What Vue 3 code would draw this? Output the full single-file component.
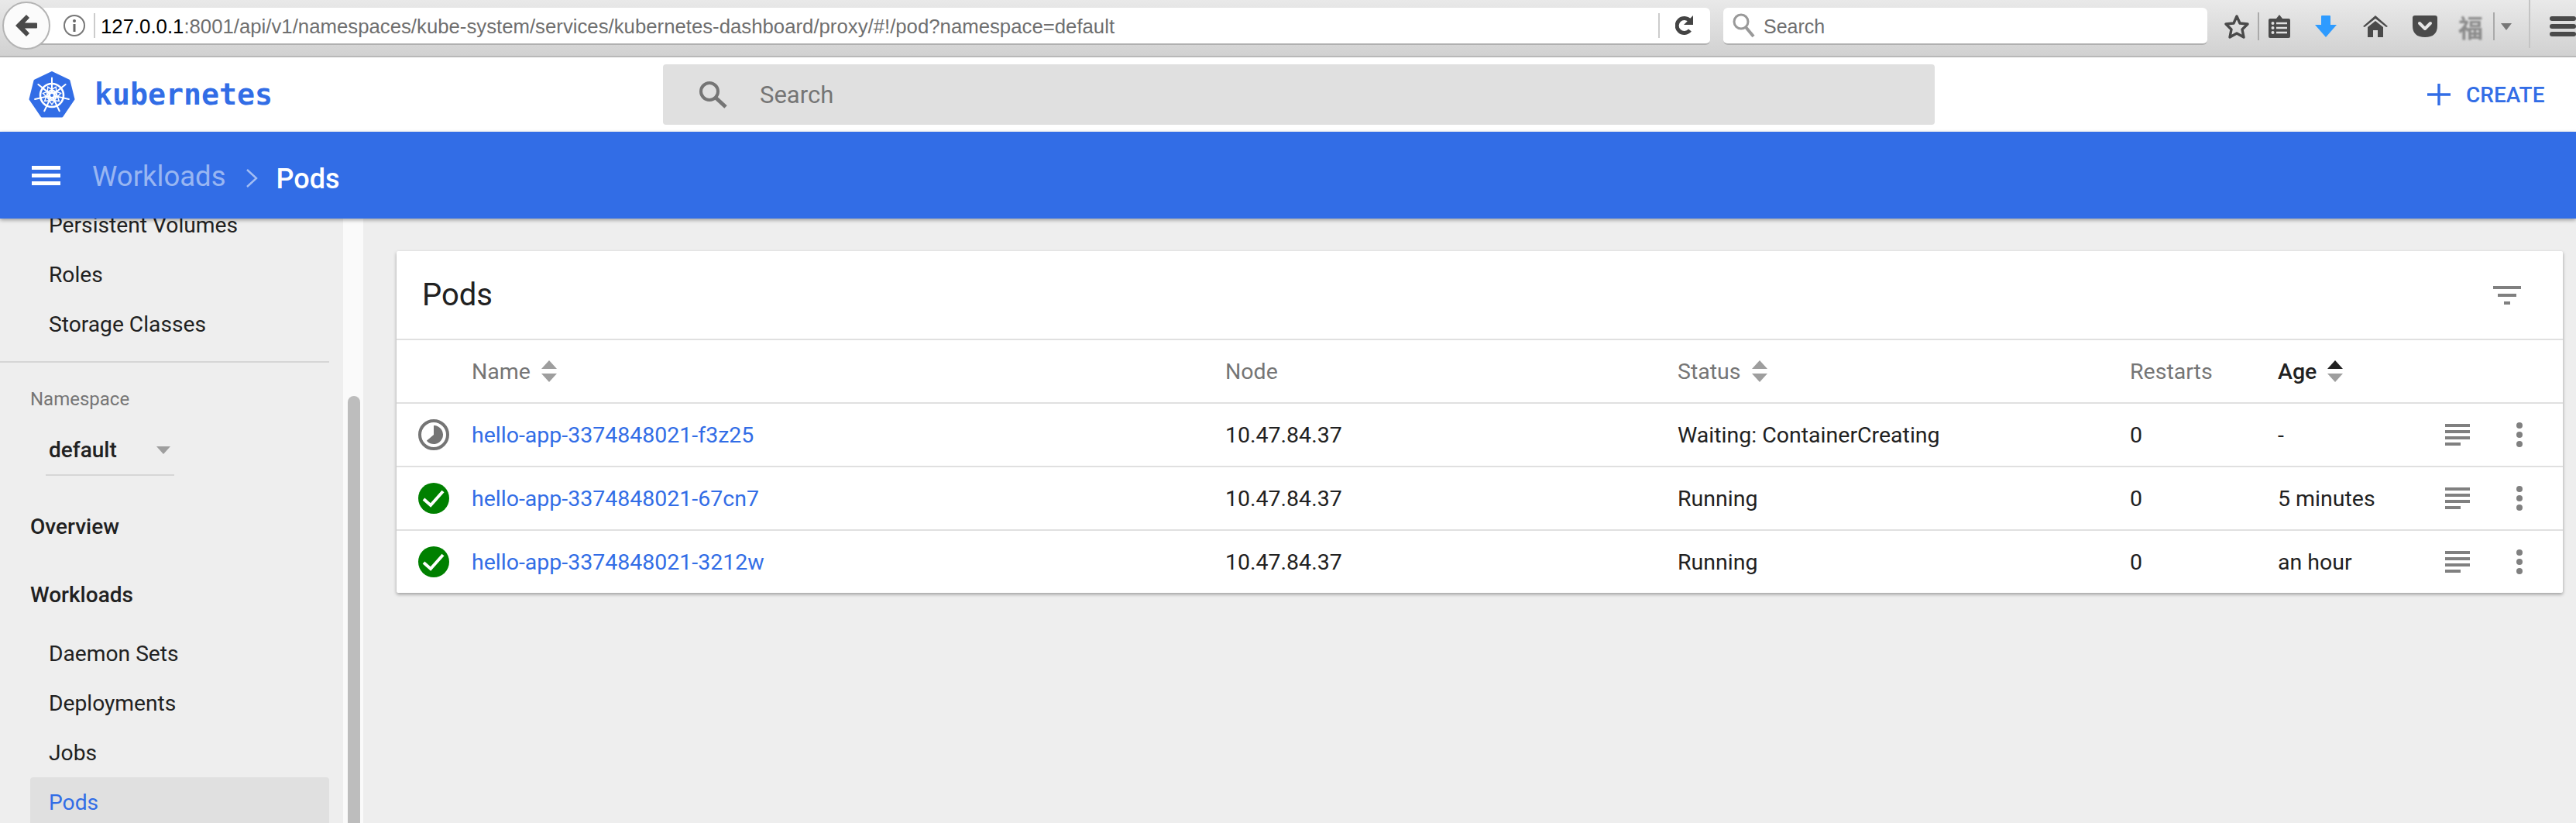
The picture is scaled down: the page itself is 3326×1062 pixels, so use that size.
<script setup>
const topItems = ['Persistent Volumes', 'Roles', 'Storage Classes']
const workloadItems = ['Daemon Sets', 'Deployments', 'Jobs', 'Pods']

const pods = [
  { name: 'hello-app-3374848021-f3z25', node: '10.47.84.37', status: 'Waiting: ContainerCreating', restarts: 0, age: '-', ok: false },
  { name: 'hello-app-3374848021-67cn7', node: '10.47.84.37', status: 'Running', restarts: 0, age: '5 minutes', ok: true },
  { name: 'hello-app-3374848021-3212w', node: '10.47.84.37', status: 'Running', restarts: 0, age: 'an hour', ok: true }
]

const spokes = [0, 51.43, 102.86, 154.29, 205.71, 257.14, 308.57]
</script>

<template>
  <div class="page">
    <!-- browser chrome -->
    <div class="chrome">
      <div class="back">
        <svg width="28" height="28" viewBox="0 0 28 28"><path d="M14 0 L0 14 L14 28 L18 24 L12 17.5 H27 Q28 17.5 28 16.5 V11.5 Q28 10.5 27 10.5 H12 L18 4 Z" fill="#4a4a4a" /></svg>
      </div>
      <div class="urlbar">
        <svg class="info" width="30" height="30" viewBox="0 0 30 30">
          <circle cx="15" cy="15" r="13" fill="none" stroke="#777" stroke-width="2" />
          <rect x="13.5" y="13" width="3" height="10" fill="#666" />
          <circle cx="15" cy="9" r="2" fill="#666" />
        </svg>
        <span class="url"><b>127.0.0.1</b>:8001/api/v1/namespaces/kube-system/services/kubernetes-dashboard/proxy/#!/pod?namespace=default</span>
        <svg class="reload" width="24" height="28" viewBox="0 0 24 28">
          <path d="M19 8 A9.5 9.5 0 1 0 19 20" fill="none" stroke="#444" stroke-width="5" />
          <path d="M23 1 V13 H11 Z" fill="#444" />
        </svg>
      </div>
      <div class="websearch">
        <svg width="30" height="32" viewBox="0 0 30 32">
          <circle cx="11" cy="11" r="9" fill="none" stroke="#999" stroke-width="3" />
          <path d="M17 18 L27 30" stroke="#999" stroke-width="4" />
        </svg>
        <span>Search</span>
      </div>
      <div class="tools">
        <svg class="t-star" width="32" height="32" viewBox="0 0 32 32"><path d="M16 3 L20 12 L30 13 L23 20 L25 30 L16 25 L7 30 L9 20 L2 13 L12 12 Z" fill="none" stroke="#4a4a4a" stroke-width="3.4" stroke-linejoin="round" /></svg>
        <i class="t-sep1"></i>
        <svg class="t-clip" width="28" height="30" viewBox="0 0 28 30">
          <path d="M2 5 H10 L14 0 L18 5 H26 Q28 5 28 7 V28 Q28 30 26 30 H2 Q0 30 0 28 V7 Q0 5 2 5 Z" fill="#4a4a4a" />
          <path d="M10 11 H24 M10 17 H24 M10 23 H24" stroke="#e0e0e0" stroke-width="2.4" />
          <circle cx="5.5" cy="11" r="2" fill="#e0e0e0" /><circle cx="5.5" cy="17" r="2" fill="#e0e0e0" /><circle cx="5.5" cy="23" r="2" fill="#e0e0e0" />
        </svg>
        <svg class="t-down" width="28" height="28" viewBox="0 0 28 28"><path d="M8 1 Q8 0 9 0 H19 Q20 0 20 1 V12 H28 L14 28 L0 12 H8 Z" fill="#2e9bff" /></svg>
        <svg class="t-home" width="32" height="28" viewBox="0 0 32 28">
          <path d="M16 0 L32 14 L30 15 L16 4 L2 15 L0 14 Z" fill="#4a4a4a" />
          <path d="M16 7 L26 15 V28 H19 V19 H13 V28 H6 V15 Z" fill="#4a4a4a" />
        </svg>
        <svg class="t-pocket" width="32" height="28" viewBox="0 0 32 28">
          <path d="M3 0 H29 Q32 0 32 3 V13 Q32 28 16 28 Q0 28 0 13 V3 Q0 0 3 0 Z" fill="#4a4a4a" />
          <path d="M9 10 L16 17 L23 10" fill="none" stroke="#e6e6e6" stroke-width="4" stroke-linecap="round" stroke-linejoin="round" />
        </svg>
        <span class="t-fuku">福</span>
        <i class="t-sep2"></i>
        <i class="t-caret"></i>
        <i class="t-line"></i>
        <div class="t-menu"><i></i><i></i><i></i></div>
      </div>
    </div>

    <!-- dashboard header -->
    <div class="header">
      <div class="brand">
        <svg width="60" height="60" viewBox="0 0 60 60">
          <path d="M30 1.5 L52 12 L58 36 L43 58 L17 58 L2 36 L8 12 Z" fill="#326de6" stroke="#326de6" stroke-width="3" stroke-linejoin="round" />
          <circle cx="30" cy="31" r="15" fill="none" stroke="#fff" stroke-width="2.6" />
          <circle cx="30" cy="31" r="3" fill="none" stroke="#fff" stroke-width="2" />
          <g stroke="#fff" stroke-linecap="round">
            <path v-for="a in spokes" :key="a" d="M30 26 V8.5" stroke-width="2" :transform="`rotate(${a} 30 31)`" />
            <path v-for="a in spokes" :key="'w' + a" d="M30 19 L35 27 H25 Z" stroke-width="1.4" fill="none" :transform="`rotate(${a + 25.7} 30 31)`" />
          </g>
        </svg>
        <span class="brand-name">kubernetes</span>
      </div>
      <div class="search">
        <svg width="38" height="36" viewBox="0 0 38 36">
          <circle cx="14" cy="14" r="11" fill="none" stroke="#757575" stroke-width="4" />
          <path d="M22 22 L35 34" stroke="#757575" stroke-width="5" />
        </svg>
        <span>Search</span>
      </div>
      <div class="create">
        <svg width="30" height="28" viewBox="0 0 30 28"><path d="M15 0 V28 M0 14 H30" stroke="#326de6" stroke-width="3.4" /></svg>
        <span>CREATE</span>
      </div>
    </div>

    <div class="bluebar">
      <div class="burger"><i></i><i></i><i></i></div>
      <span class="crumb">Workloads</span>
      <svg class="chev" width="16" height="24" viewBox="0 0 16 24"><path d="M2 1 L14 12 L2 23" fill="none" stroke="#fff" stroke-opacity=".55" stroke-width="2.4" /></svg>
      <span class="crumb-now">Pods</span>
    </div>

    <div class="body">
      <nav class="side">
        <div class="side-top">
          <a v-for="i in topItems" :key="i" class="nav-item">{{ i }}</a>
        </div>
        <div class="divider"></div>
        <div class="ns-label">Namespace</div>
        <div class="ns-select">
          <span>default</span>
          <i class="ns-caret"></i>
        </div>
        <div class="nav-head first">Overview</div>
        <div class="nav-head second">Workloads</div>
        <div class="nav-group">
          <a v-for="i in workloadItems" :key="i" class="nav-item" :class="{ active: i === 'Pods' }">{{ i }}</a>
        </div>
      </nav>
      <div class="track"><div class="thumb"></div></div>

      <main class="main">
        <section class="card">
          <div class="card-title">
            <span>Pods</span>
            <svg width="36" height="24" viewBox="0 0 36 24"><path d="M0 0 H36 V4 H0 Z M6 10 H30 V14 H6 Z M14 20 H22 V24 H14 Z" fill="#808080" /></svg>
          </div>

          <div class="row head">
            <span></span>
            <span class="cell-sort">Name
              <svg width="20" height="28" viewBox="0 0 20 28"><path d="M10 0 L20 11 H0 Z M0 17 H20 L10 28 Z" fill="#9e9e9e" /></svg>
            </span>
            <span>Node</span>
            <span class="cell-sort">Status
              <svg width="20" height="28" viewBox="0 0 20 28"><path d="M10 0 L20 11 H0 Z M0 17 H20 L10 28 Z" fill="#9e9e9e" /></svg>
            </span>
            <span>Restarts</span>
            <span class="cell-sort sorted">Age
              <svg width="20" height="28" viewBox="0 0 20 28"><path d="M10 0 L20 11 H0 Z" fill="#212121" /><path d="M0 17 H20 L10 28 Z" fill="#9e9e9e" /></svg>
            </span>
            <span></span>
            <span></span>
          </div>

          <div v-for="p in pods" :key="p.name" class="row">
            <span class="state">
              <svg v-if="p.ok" width="40" height="40" viewBox="0 0 40 40">
                <circle cx="20" cy="20" r="20" fill="#008000" />
                <path d="M7 21 L16 29 L32 11" fill="none" stroke="#fff" stroke-width="4" />
              </svg>
              <svg v-else width="40" height="40" viewBox="0 0 40 40">
                <circle cx="20" cy="20" r="18" fill="#fff" stroke="#757575" stroke-width="4" />
                <path d="M20 20 V8 A12 12 0 1 1 10.8 27.7 Z" fill="#757575" />
              </svg>
            </span>
            <a class="pod-link">{{ p.name }}</a>
            <span>{{ p.node }}</span>
            <span>{{ p.status }}</span>
            <span>{{ p.restarts }}</span>
            <span>{{ p.age }}</span>
            <svg width="32" height="28" viewBox="0 0 32 28"><path d="M0 0 H32 V4 H0 Z M0 8 H32 V12 H0 Z M0 16 H32 V20 H0 Z M0 24 H20 V28 H0 Z" fill="#808080" /></svg>
            <svg width="8" height="32" viewBox="0 0 8 32"><circle cx="4" cy="4" r="4" fill="#808080" /><circle cx="4" cy="16" r="4" fill="#808080" /><circle cx="4" cy="28" r="4" fill="#808080" /></svg>
          </div>
        </section>
      </main>
    </div>
  </div>
</template>

<style scoped>
.page {
  width: 3326px;
  height: 1062px;
  overflow: hidden;
  font-family: Roboto, "Liberation Sans", sans-serif;
  color: #212121;
  background: #eee;
}

/* browser */
.chrome {
  height: 74px;
  box-sizing: border-box;
  border-bottom: 2px solid #b8b8b8;
  background: linear-gradient(#e9e9e9, #d1d1d1);
  display: flex;
  align-items: flex-start;
  padding: 10px 0 0 3px;
  font-family: "Liberation Sans", sans-serif;
}
.back {
  width: 62px;
  height: 62px;
  margin-top: -8px;
  box-sizing: border-box;
  border: 2px solid #b4b4b4;
  border-radius: 50%;
  background: #fbfbfb;
  display: flex;
  align-items: center;
  justify-content: center;
  position: relative;
  z-index: 1;
}
.urlbar {
  width: 2189px;
  height: 48px;
  margin-left: -46px;
  box-sizing: border-box;
  padding-left: 62px;
  background: #fff;
  border-bottom: 2px solid #b0b0b0;
  border-radius: 0 6px 6px 0;
  display: flex;
  align-items: center;
}
.info { flex: none; margin-right: 10px; }
.url {
  width: 2022px;
  flex: none;
  box-sizing: border-box;
  padding-left: 7px;
  height: 32px;
  line-height: 34px;
  border-left: 2px solid #ccc;
  border-right: 2px solid #ccc;
  font-size: 25.75px;
  color: #6f6f6f;
  white-space: nowrap;
}
.url b { color: #000; font-weight: 400; }
.reload { flex: none; margin-left: 20px; }
.websearch {
  width: 625px;
  height: 48px;
  margin-left: 17px;
  flex: none;
  box-sizing: border-box;
  padding-left: 12px;
  background: #fff;
  border-bottom: 2px solid #b0b0b0;
  border-radius: 6px;
  display: flex;
  align-items: center;
  gap: 10px;
  font-size: 25px;
  color: #6f6f6f;
}
.websearch span { margin-top: 2px; }
.tools {
  display: flex;
  align-items: center;
  height: 48px;
  margin-top: 0;
  margin-left: 22px;
  position: relative;
}
.tools > * { flex: none; }
.t-sep1, .t-sep2 { width: 2px; height: 36px; background: #aaa; }
.t-sep1 { margin-left: 11px; }
.t-clip { margin-left: 12px; }
.t-down { margin-left: 32px; }
.t-home { margin-left: 34px; }
.t-pocket { margin-left: 32px; }
.t-fuku {
  margin-left: 27px;
  width: 34px;
  font-family: "Noto Sans CJK SC", sans-serif;
  font-size: 32px;
  line-height: 36px;
  font-weight: 700;
  color: #8b8b8b;
  filter: blur(1px);
}
.t-sep2 { margin-left: 11px; }
.t-caret {
  margin-left: 8px;
  width: 0;
  height: 0;
  border-left: 7px solid transparent;
  border-right: 7px solid transparent;
  border-top: 9px solid #777;
}
.t-line {
  margin-left: 22px;
  width: 2px;
  height: 72px;
  margin-top: -20px;
  background: #c4c4c4;
  align-self: flex-start;
}
.t-menu {
  margin-left: 25px;
  width: 34px;
  display: flex;
  flex-direction: column;
  gap: 4px;
}
.t-menu i { height: 6px; border-radius: 3px; background: #4a4a4a; }

/* dashboard header */
.header {
  height: 96px;
  background: #fff;
  display: flex;
  align-items: center;
  position: relative;
}
.brand {
  width: 856px;
  flex: none;
  box-sizing: border-box;
  padding-left: 37px;
  display: flex;
  align-items: center;
  gap: 25px;
}
.brand-name {
  font-family: "DejaVu Sans Mono", monospace;
  font-size: 38.2px;
  font-weight: 700;
  color: #326de6;
}
.search {
  width: 1642px;
  height: 78px;
  flex: none;
  box-sizing: border-box;
  padding-left: 46px;
  background: #e0e0e0;
  border-radius: 4px;
  display: flex;
  align-items: center;
  gap: 41px;
  font-size: 31px;
  color: #757575;
}
.create {
  margin-left: 636px;
  display: flex;
  align-items: center;
  gap: 20px;
  font-size: 28px;
  font-weight: 500;
  color: #326de6;
}
.bluebar {
  height: 112px;
  background: #326de6;
  box-shadow: 0 2px 5px rgba(0, 0, 0, .35);
  display: flex;
  align-items: center;
  position: relative;
  z-index: 2;
}
.burger {
  margin-left: 41px;
  width: 37px;
  display: flex;
  flex-direction: column;
  gap: 5px;
}
.burger i { height: 5px; background: #fff; }
.crumb {
  margin-left: 41px;
  font-size: 36.5px;
  color: rgba(255, 255, 255, .5);
  margin-top: 2px;
}
.chev { margin-left: 26px; margin-top: 7px; }
.crumb-now {
  margin-left: 23px;
  font-size: 36px;
  font-weight: 500;
  color: #fff;
  margin-top: 10px;
}

/* sidebar */
.body {
  display: flex;
  height: 780px;
}
.side {
  width: 443px;
  flex: none;
  overflow: hidden;
  background: #eee;
}
.side-top { margin-top: -24px; }
.nav-item {
  display: block;
  height: 64px;
  line-height: 66px;
  margin-left: 39px;
  width: 386px;
  box-sizing: border-box;
  padding-left: 24px;
  font-size: 28.2px;
  color: #212121;
}
.nav-item.active {
  height: 70px;
  background: #e0e0e0;
  border-radius: 4px 4px 0 0;
  color: #326de6;
}
.divider {
  margin-top: 16px;
  width: 425px;
  height: 2px;
  background: #d6d6d6;
}
.ns-label {
  margin: 27px 0 0 39px;
  height: 40px;
  line-height: 40px;
  font-size: 24px;
  color: #757575;
}
.ns-select {
  margin: 12px 0 0 59px;
  width: 166px;
  height: 67px;
  box-sizing: border-box;
  border-bottom: 2px solid #d6d6d6;
  padding: 2px 5px 0 4px;
  display: flex;
  align-items: center;
  justify-content: space-between;
  font-size: 28px;
  font-weight: 500;
}
.ns-caret {
  width: 0;
  height: 0;
  border-left: 9px solid transparent;
  border-right: 9px solid transparent;
  border-top: 10px solid #9e9e9e;
}
.nav-head {
  height: 64px;
  line-height: 66px;
  margin-left: 39px;
  font-size: 28px;
  font-weight: 500;
}
.nav-head.first { margin-top: 33px; }
.nav-head.second { margin-top: 24px; }
.nav-group { margin-top: 12px; }
.track {
  width: 26px;
  flex: none;
  background: #fafafa;
  box-sizing: border-box;
  padding: 229px 4px 0 6px;
}
.thumb {
  height: 600px;
  border-radius: 8px;
  background: #bdbdbd;
}

/* pods card */
.main {
  flex: 1;
  padding: 42px 17px 0 43px;
}
.card {
  background: #fff;
  border-radius: 2px;
  box-shadow: 0 2px 4px rgba(0, 0, 0, .35);
}
.card-title {
  height: 113px;
  box-sizing: border-box;
  padding: 0 54px 0 33px;
  display: flex;
  align-items: center;
  justify-content: space-between;
  font-size: 40px;
}
.row {
  height: 82px;
  box-sizing: border-box;
  border-top: 2px solid #e0e0e0;
  display: grid;
  grid-template-columns: 97px 973px 584px 584px 191px 216px 92px 1fr;
  align-items: center;
  font-size: 28.5px;
}
.row.head { color: #757575; }
.state { display: flex; padding-left: 28px; }
.pod-link { color: #326de6; }
.cell-sort { display: flex; align-items: center; gap: 14px; }
.sorted { color: #212121; font-weight: 500; }
</style>

<style>
html, body { margin: 0; background: #eee; }
</style>
